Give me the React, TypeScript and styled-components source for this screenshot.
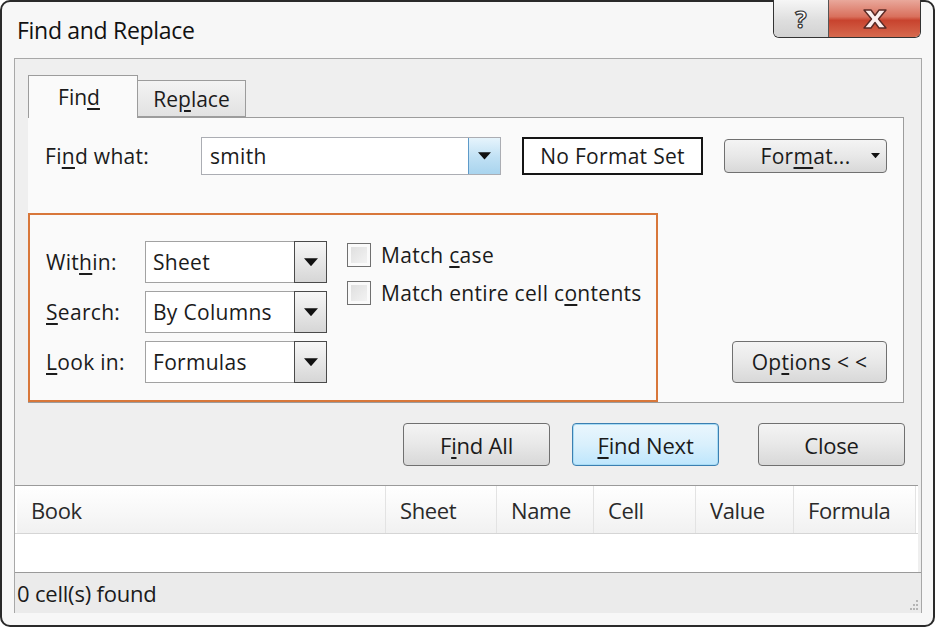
import styled, { createGlobalStyle } from "styled-components";

const GlobalStyle = createGlobalStyle`
  html, body {
    margin: 0;
    background: #ffffff;
  }
  body {
    font-family: "Open Sans", "Noto Sans", sans-serif;
    color: #1b1b1b;
  }
`;

function Triangle({ size = 14 }: { size?: number }) {
  return (
    <svg width={size} height={size * 0.6} viewBox="0 0 14 8">
      <path d="M0 0 L14 0 L7 8 Z" fill="#111" />
    </svg>
  );
}

function Select({ value }: { value: string }) {
  return (
    <SelectBox>
      <SelectValue>{value}</SelectValue>
      <SelectArrow>
        <Triangle />
      </SelectArrow>
    </SelectBox>
  );
}

export default function App() {
  return (
    <>
      <GlobalStyle />
      <Window>
        <TitleBar>
          <Title>Find and Replace</Title>
          <Controls>
            <HelpButton>?</HelpButton>
            <CloseButton>
              <svg width="30" height="24" viewBox="0 0 30 24">
                <path
                  d="M4 3 L11 3 L15 8.5 L19 3 L26 3 L18.5 12 L26 21 L19 21 L15 15.5 L11 21 L4 21 L11.5 12 Z"
                  fill="#fbeeee"
                  stroke="#5a2a26"
                  strokeWidth="1.4"
                  strokeLinejoin="round"
                />
              </svg>
            </CloseButton>
          </Controls>
        </TitleBar>

        <Frame>
          <Tabs>
            <Tab $active>
              Fin<AccessKey>d</AccessKey>
            </Tab>
            <Tab>
              Re<AccessKey>p</AccessKey>lace
            </Tab>
          </Tabs>

          <Panel>
            <FindRow>
              <FindLabel>
                Fi<AccessKey>n</AccessKey>d what:
              </FindLabel>
              <Combo>
                <ComboValue>smith</ComboValue>
                <ComboArrow>
                  <Triangle size={13} />
                </ComboArrow>
              </Combo>
              <FormatBox>No Format Set</FormatBox>
              <FormatButton>
                <span>
                  For<AccessKey>m</AccessKey>at...
                </span>
                <FormatCaret>
                  <Triangle size={9} />
                </FormatCaret>
              </FormatButton>
            </FindRow>

            <OptionsRow>
              <Highlight>
                <OptionGrid>
                  <OptionLabel>
                    Wit<AccessKey>h</AccessKey>in:
                  </OptionLabel>
                  <Select value="Sheet" />
                  <OptionLabel>
                    <AccessKey>S</AccessKey>earch:
                  </OptionLabel>
                  <Select value="By Columns" />
                  <OptionLabel>
                    <AccessKey>L</AccessKey>ook in:
                  </OptionLabel>
                  <Select value="Formulas" />
                </OptionGrid>
                <Checks>
                  <CheckRow>
                    <CheckBox />
                    <span>
                      Match <AccessKey>c</AccessKey>ase
                    </span>
                  </CheckRow>
                  <CheckRow>
                    <CheckBox />
                    <span>
                      Match entire cell c<AccessKey>o</AccessKey>ntents
                    </span>
                  </CheckRow>
                </Checks>
              </Highlight>
              <OptionsButton>
                Op<AccessKey>t</AccessKey>ions &lt; &lt;
              </OptionsButton>
            </OptionsRow>
          </Panel>

          <ActionRow>
            <ActionButton>
              F<AccessKey>i</AccessKey>nd All
            </ActionButton>
            <ActionButton $primary>
              <AccessKey>F</AccessKey>ind Next
            </ActionButton>
            <ActionButton $gap={39}>Close</ActionButton>
          </ActionRow>

          <Results>
            <ResultHeader>
              <HeaderCell $width={369}>Book</HeaderCell>
              <HeaderCell $width={111}>Sheet</HeaderCell>
              <HeaderCell $width={97}>Name</HeaderCell>
              <HeaderCell $width={102}>Cell</HeaderCell>
              <HeaderCell $width={98}>Value</HeaderCell>
              <HeaderCell $width={122}>Formula</HeaderCell>
            </ResultHeader>
            <ResultBody />
          </Results>

          <StatusBar>
            <span>0 cell(s) found</span>
            <Grip>
              <svg width="12" height="12" viewBox="0 0 12 12">
                <g fill="#b5b5b5">
                  <rect x="9" y="1" width="2" height="2" />
                  <rect x="6" y="5" width="2" height="2" />
                  <rect x="9" y="5" width="2" height="2" />
                  <rect x="3" y="9" width="2" height="2" />
                  <rect x="6" y="9" width="2" height="2" />
                  <rect x="9" y="9" width="2" height="2" />
                </g>
              </svg>
            </Grip>
          </StatusBar>
        </Frame>
      </Window>
    </>
  );
}

const Window = styled.div`
  box-sizing: border-box;
  width: 935px;
  height: 627px;
  display: flex;
  flex-direction: column;

  border: 2px solid #2a2a2a;
  border-radius: 10px;
  background: #f7f7f7;
`;

const TitleBar = styled.div`
  display: flex;
  justify-content: space-between;
  align-items: flex-start;

  height: 56px;
  padding: 0 12px 0 15px;
`;

const Title = styled.div`
  margin-top: 12px;

  font-size: 23px;
  letter-spacing: -0.3px;
  color: #111;
`;

const Controls = styled.div`
  display: flex;
  margin-top: -2px;

  border: 1.5px solid #333;
  border-top: none;
  border-radius: 0 0 6px 6px;
  overflow: hidden;
`;

const HelpButton = styled.div`
  display: flex;
  align-items: center;
  justify-content: center;

  width: 54px;
  height: 37px;

  font-size: 24px;
  font-weight: 700;
  color: #fff;
  -webkit-text-stroke: 1.2px #333;
  background: linear-gradient(#f6f6f6, #dedede 55%, #d2d2d2);
  border-right: 1px solid #555;
`;

const CloseButton = styled.div`
  display: flex;
  align-items: center;
  justify-content: center;

  width: 91px;
  height: 37px;

  background: linear-gradient(#e9a89b, #d9705d 45%, #c8432e 55%, #d66a4f);
`;

const Frame = styled.div`
  flex: 1;
  display: flex;
  flex-direction: column;

  margin: 0 11px 12px 12px;
  border: 1px solid #a8a8a8;
  border-bottom: none;
  background: #efefef;
`;

const Tabs = styled.div`
  display: flex;
  align-items: flex-end;

  height: 42px;
  padding: 16px 0 0 13px;
  position: relative;
  z-index: 1;
`;

const Tab = styled.div<{ $active?: boolean }>`
  box-sizing: border-box;
  display: flex;
  align-items: center;
  justify-content: center;

  width: ${({ $active }) => ($active ? 110 : 108)}px;
  height: ${({ $active }) => ($active ? 43 : 37)}px;
  margin-bottom: ${({ $active }) => ($active ? -1 : 0)}px;
  padding-right: ${({ $active }) => ($active ? 8 : 0)}px;

  font-size: 21px;
  border: 1px solid #9c9c9c;
  border-bottom: ${({ $active }) => ($active ? "none" : "1px solid #9c9c9c")};
  border-left: ${({ $active }) => ($active ? "1px solid #9c9c9c" : "none")};
  background: ${({ $active }) =>
    $active ? "#fafafa" : "linear-gradient(#f3f3f3, #e2e2e2)"};
`;

const AccessKey = styled.u`
  text-decoration-thickness: 1.5px;
  text-underline-offset: 3px;
`;

const Panel = styled.div`
  box-sizing: border-box;
  display: flex;
  flex-direction: column;

  width: 876px;
  height: 286px;
  margin-left: 13px;

  border: 1px solid #9c9c9c;
  border-left: none;
  background: #fafafa;
`;

const FindRow = styled.div`
  display: flex;
  align-items: center;

  padding: 19px 0 0 17px;
  font-size: 21px;
  letter-spacing: 0.3px;
`;

const FindLabel = styled.div`
  width: 156px;
`;

const Combo = styled.div`
  box-sizing: border-box;
  display: flex;

  width: 300px;
  height: 38px;

  border: 1px solid #abadb3;
  background: #fff;
`;

const ComboValue = styled.div`
  flex: 1;
  display: flex;
  align-items: center;
  padding-left: 8px;
`;

const ComboArrow = styled.div`
  display: flex;
  align-items: center;
  justify-content: center;

  width: 31px;
  border-left: 1px solid #5e9ac9;
  background: linear-gradient(#e6f4fc, #bfe0f4 55%, #a9d4ee);
`;

const FormatBox = styled.div`
  box-sizing: border-box;
  display: flex;
  align-items: center;
  justify-content: center;

  width: 181px;
  height: 38px;
  margin-left: 21px;

  border: 2px solid #151515;
  background: #fff;
`;

const FormatButton = styled.div`
  box-sizing: border-box;
  position: relative;
  display: flex;
  align-items: center;
  justify-content: center;

  width: 163px;
  height: 34px;
  margin-left: 21px;

  border: 1px solid #707070;
  border-radius: 4px;
  background: linear-gradient(#f4f4f4, #e8e8e8 50%, #d8d8d8);
`;

const FormatCaret = styled.span`
  position: absolute;
  right: 6px;
  top: 13px;
  display: flex;
`;

const OptionsRow = styled.div`
  flex: 1;
  display: flex;
  justify-content: space-between;
  align-items: flex-end;
`;

const Highlight = styled.div`
  box-sizing: border-box;
  display: flex;
  align-items: flex-start;

  width: 630px;
  height: 189px;
  padding: 26px 0 0 16px;

  border: 2.5px solid #d8773a;
  font-size: 21px;
  letter-spacing: 0.3px;
`;

const OptionGrid = styled.div`
  display: grid;
  grid-template-columns: 99px 182px;
  row-gap: 8px;
  align-items: center;
`;

const OptionLabel = styled.div`
  white-space: nowrap;
`;

const SelectBox = styled.div`
  box-sizing: border-box;
  display: flex;

  height: 42px;
  border: 1px solid #a2a2a2;
  background: #fff;
`;

const SelectValue = styled.div`
  flex: 1;
  display: flex;
  align-items: center;
  padding-left: 7px;
  white-space: nowrap;
`;

const SelectArrow = styled.div`
  box-sizing: border-box;
  display: flex;
  align-items: center;
  justify-content: center;

  width: 33px;
  margin: -1px -1px -1px 0;

  border: 1.5px solid #4a4a4a;
  background: linear-gradient(#f7f7f7, #d6d6d6);
`;

const Checks = styled.div`
  display: flex;
  flex-direction: column;
  gap: 10px;

  margin: 0 0 0 20px;
`;

const CheckRow = styled.div`
  display: flex;
  align-items: center;
  gap: 10px;
  white-space: nowrap;
`;

const CheckBox = styled.span`
  box-sizing: border-box;
  flex-shrink: 0;
  width: 24px;
  height: 24px;

  border: 1.5px solid #707070;
  background: linear-gradient(135deg, #dcdcdc, #f6f6f6);
  box-shadow: inset 0 0 0 3px #fafafa;
`;

const OptionsButton = styled.div`
  box-sizing: border-box;
  display: flex;
  align-items: center;
  justify-content: center;

  width: 155px;
  height: 42px;
  margin: 0 16px 19px 0;

  font-size: 21px;
  letter-spacing: 0.3px;
  border: 1px solid #707070;
  border-radius: 4px;
  background: linear-gradient(#f4f4f4, #e8e8e8 50%, #d8d8d8);
`;

const ActionRow = styled.div`
  display: flex;
  justify-content: flex-end;

  margin: 20px 16px 0 0;
`;

const ActionButton = styled.div<{ $primary?: boolean; $gap?: number }>`
  box-sizing: border-box;
  display: flex;
  align-items: center;
  justify-content: center;

  width: 147px;
  height: 43px;
  margin-left: ${({ $gap }) => $gap ?? 22}px;

  font-size: 22px;
  letter-spacing: -0.2px;
  border: 1px solid ${({ $primary }) => ($primary ? "#3c7fb1" : "#707070")};
  border-radius: 4px;
  background: ${({ $primary }) =>
    $primary
      ? "linear-gradient(#eaf6fd, #d9f0fc 50%, #bee6fd)"
      : "linear-gradient(#f4f4f4, #e8e8e8 50%, #d8d8d8)"};
  box-shadow: ${({ $primary }) =>
    $primary ? "inset 0 0 0 1px #a8dcf5" : "none"};
`;

const Results = styled.div`
  display: flex;
  flex-direction: column;

  margin: 19px 3px 0 0;
  border-top: 1.5px solid #9a9a9a;
  background: #fff;
`;

const ResultHeader = styled.div`
  display: flex;
  height: 47px;
  padding-left: 2px;

  border-bottom: 1px solid #d5d5d5;
`;

const HeaderCell = styled.div<{ $width: number }>`
  box-sizing: border-box;
  display: flex;
  align-items: center;

  width: ${({ $width }) => $width}px;
  padding-left: 14px;

  font-size: 22px;
  letter-spacing: -0.4px;
  color: #2a2a2a;
  border-right: 1px solid #e3e3e3;
  background: linear-gradient(#ffffff, #f7f7f7 60%, #f1f1f1);
`;

const ResultBody = styled.div`
  height: 38px;
`;

const StatusBar = styled.div`
  flex: 1;
  display: flex;
  align-items: center;
  justify-content: space-between;

  padding-left: 2px;
  font-size: 22px;
  letter-spacing: -0.2px;
  border-top: 1.5px solid #9a9a9a;
  background: #ebebeb;
`;

const Grip = styled.div`
  display: flex;
  align-self: flex-end;
  margin: 0 2px 2px 0;
`;
